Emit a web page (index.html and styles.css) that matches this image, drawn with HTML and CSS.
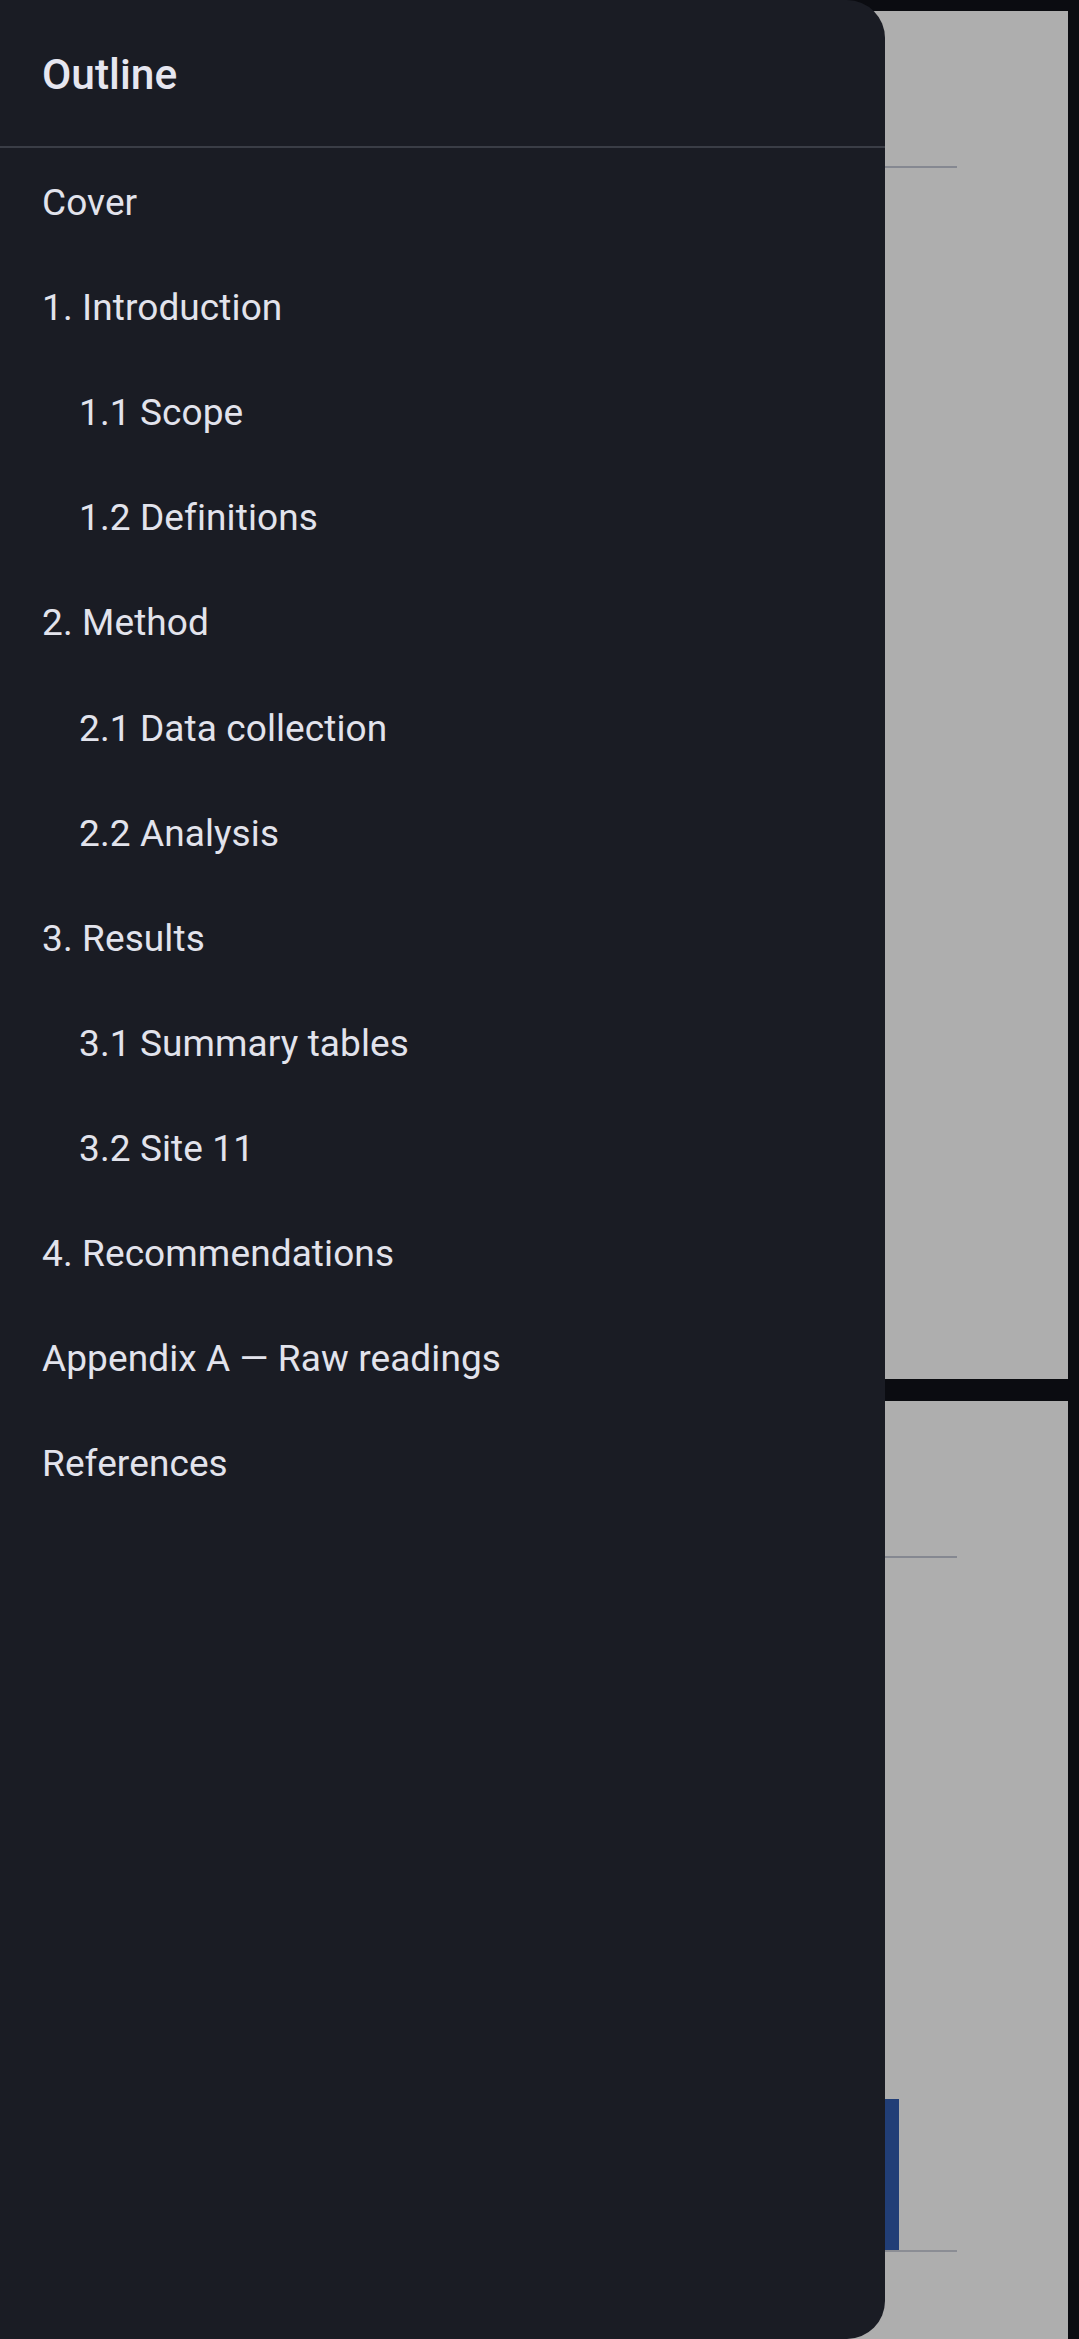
FILE: index.html
```html
<!DOCTYPE html>
<html lang="en">
<head>
<meta charset="utf-8">
<title>Outline</title>
<link rel="stylesheet" href="styles.css">
</head>
<body>
<div class="viewer">
  <div class="pages">
    <section class="page">
      <div class="page-rule"></div>
    </section>
    <section class="page">
      <div class="page-rule"></div>
      <div class="chart">
        <div class="bar" style="height:210px"></div>
        <div class="bar" style="height:320px"></div>
        <div class="bar" style="height:260px"></div>
        <div class="bar" style="height:190px"></div>
        <div class="bar" style="height:151px"></div>
      </div>
    </section>
  </div>

  <nav class="drawer">
    <header class="drawer-head">Outline</header>
    <ul class="toc">
      <li class="toc-item">Cover</li>
      <li class="toc-item">1. Introduction</li>
      <li class="toc-item sub">1.1 Scope</li>
      <li class="toc-item sub">1.2 Definitions</li>
      <li class="toc-item">2. Method</li>
      <li class="toc-item sub">2.1 Data collection</li>
      <li class="toc-item sub">2.2 Analysis</li>
      <li class="toc-item">3. Results</li>
      <li class="toc-item sub">3.1 Summary tables</li>
      <li class="toc-item sub">3.2 Site 11</li>
      <li class="toc-item">4. Recommendations</li>
      <li class="toc-item">Appendix A — Raw readings</li>
      <li class="toc-item">References</li>
    </ul>
  </nav>
</div>
</body>
</html>
```

FILE: styles.css
```css
html, body {
  margin: 0;
  padding: 0;
}
body {
  background: #0b0c11;
  font-family: Roboto, "Noto Sans", "Liberation Sans", sans-serif;
  width: 1079px;
  height: 2339px;
  overflow: hidden;
}
.viewer {
  position: relative;
  width: 1079px;
  height: 2339px;
  overflow: hidden;
}
.pages {
  display: flex;
  flex-direction: column;
  gap: 22px;
  padding: 11px 11px 0 11px;
}
.page {
  background: #aeaeae;
  height: 1368px;
  padding: 155px 111px 0 111px;
  box-sizing: border-box;
  display: flex;
  flex-direction: column;
}
.page-rule {
  height: 1.5px;
  background: #858891;
}
.chart {
  margin-top: 539px;
  height: 153px;
  display: flex;
  align-items: flex-end;
  gap: 38px;
  border-bottom: 2px solid #8b8d94;
  width: 835px;
}
.bar {
  width: 125px;
  background: #213e77;
}
.drawer {
  position: absolute;
  left: 0;
  top: 0;
  width: 885px;
  height: 2339px;
  background: #1a1c24;
  border-radius: 0 38px 38px 0;
  display: flex;
  flex-direction: column;
}
.drawer-head {
  height: 148px;
  box-sizing: border-box;
  display: flex;
  align-items: center;
  padding: 2px 0 0 42px;
  font-size: 42.5px;
  font-weight: 500;
  color: #e6e6f0;
  border-bottom: 2px solid #3a3d46;
}
.toc {
  list-style: none;
  margin: 0;
  padding: 0;
}
.toc-item {
  height: 105.1px;
  box-sizing: border-box;
  display: flex;
  align-items: center;
  padding: 4px 0 0 42px;
  font-size: 37px;
  letter-spacing: 0.1px;
  color: #e2e3ec;
  white-space: nowrap;
}
.toc-item.sub {
  padding-left: 79px;
}
```
